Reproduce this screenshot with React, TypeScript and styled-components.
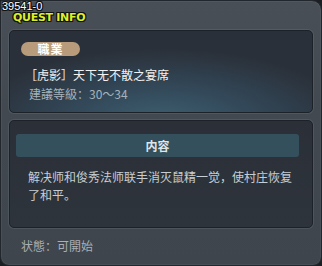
import { FC } from "react";
import styled, { createGlobalStyle } from "styled-components";

const GlobalStyle = createGlobalStyle`
    html, body {
        margin: 0;
        padding: 0;
        background: #1b1f24;
    }
    * {
        box-sizing: border-box;
    }
`;

const cjk = `"Noto Sans CJK SC", "Noto Sans CJK TC", "Liberation Sans", sans-serif`;

const Window = styled.div`
    width: 322px;
    height: 266px;
    display: flex;
    flex-direction: column;
    border: 1px solid #22272d;
    border-radius: 2px 10px 9px 9px;
    background: linear-gradient(180deg, #484f57 0%, #424950 40%, #3e454c 100%);
    box-shadow: inset 0 0 0 1px rgba(255, 255, 255, 0.05);
    font-family: ${cjk};
    overflow: hidden;
`;

const Header = styled.div`
    height: 29px;
    display: flex;
    flex-direction: column;
    padding-left: 1px;
`;

const outline = `
    text-shadow: -1px 0 0 #111, 1px 0 0 #111, 0 -1px 0 #111, 0 1px 0 #111,
        -1px -1px 0 #111, 1px 1px 0 #111, -1px 1px 0 #111, 1px -1px 0 #111;
`;

const IdLabel = styled.div`
    font-family: "Liberation Sans", sans-serif;
    font-size: 11px;
    line-height: 10px;
    height: 10px;
    color: #ffffff;
    ${outline}
`;

const Title = styled.div`
    margin-top: 1px;
    margin-left: 11px;
    font-family: "DejaVu Sans", "Liberation Sans", sans-serif;
    font-weight: bold;
    font-size: 11px;
    line-height: 11px;
    letter-spacing: -0.3px;
    color: #dcef2c;
    ${outline}
`;

const Body = styled.div`
    flex: 1;
    display: flex;
    flex-direction: column;
    padding: 0 8px;
`;

const Panel = styled.div<{ $variant: "job" | "content" }>`
    border: 1px solid #1d2228;
    border-radius: 5px;
    box-shadow: 0 0 0 1px rgba(120, 130, 140, 0.25);
    display: flex;
    flex-direction: column;
    ${(p) =>
        p.$variant === "job"
            ? `
        height: 83px;
        padding: 11px 11px 0;
        background: radial-gradient(ellipse 75% 110% at 50% 115%, #3e6171 0%, #33495a 40%, #2a3039 85%);
    `
            : `
        height: 108px;
        margin-top: 7px;
        padding: 13px 13px 0 6px;
        background: linear-gradient(180deg, #2b3038 0%, #2e343c 100%);
    `}
`;

const Badge = styled.div`
    width: 59px;
    height: 14px;
    border-radius: 7px;
    background: #b89b7a;
    color: #ffffff;
    font-size: 12px;
    font-weight: bold;
    line-height: 14px;
    text-align: center;
    letter-spacing: 1px;
`;

const QuestName = styled.div`
    margin-top: 11px;
    padding-left: 4px;
    font-size: 12px;
    line-height: 16px;
    color: #f2f2f2;
`;

const Requirement = styled.div`
    margin-top: 3px;
    padding-left: 8px;
    font-size: 12px;
    line-height: 16px;
    color: #a6b2ba;
`;

const SectionBar = styled.div`
    height: 23px;
    border-radius: 3px;
    background: #35505d;
    color: #dfe6e9;
    font-size: 12px;
    font-weight: bold;
    line-height: 23px;
    text-align: center;
`;

const Description = styled.div`
    margin-top: 11px;
    padding-left: 12px;
    font-size: 12px;
    line-height: 18px;
    color: #c7ced3;
`;

const Status = styled.div`
    margin-top: 10px;
    padding-left: 12px;
    font-size: 12px;
    line-height: 16px;
    color: #a9afb4;
`;

interface QuestInfoProps {
    questId: string;
    category: string;
    name: string;
    minLevel: number;
    maxLevel: number;
    description: string;
    status: string;
}

const QuestInfo: FC<QuestInfoProps> = ({ questId, category, name, minLevel, maxLevel, description, status }) => {
    return (
        <Window>
            <Header>
                <IdLabel>{questId}</IdLabel>
                <Title>QUEST INFO</Title>
            </Header>
            <Body>
                <Panel $variant="job">
                    <Badge>{category}</Badge>
                    <QuestName>{name}</QuestName>
                    <Requirement>{`建議等級：${minLevel}～${maxLevel}`}</Requirement>
                </Panel>
                <Panel $variant="content">
                    <SectionBar>内容</SectionBar>
                    <Description>{description}</Description>
                </Panel>
                <Status>{`状態：${status}`}</Status>
            </Body>
        </Window>
    );
};

export default function App() {
    return (
        <>
            <GlobalStyle />
            <QuestInfo
                questId="39541-0"
                category="職業"
                name="［虎影］天下无不散之宴席"
                minLevel={30}
                maxLevel={34}
                description="解决师和俊秀法师联手消灭鼠精一觉，使村庄恢复了和平。"
                status="可開始"
            />
        </>
    );
}
